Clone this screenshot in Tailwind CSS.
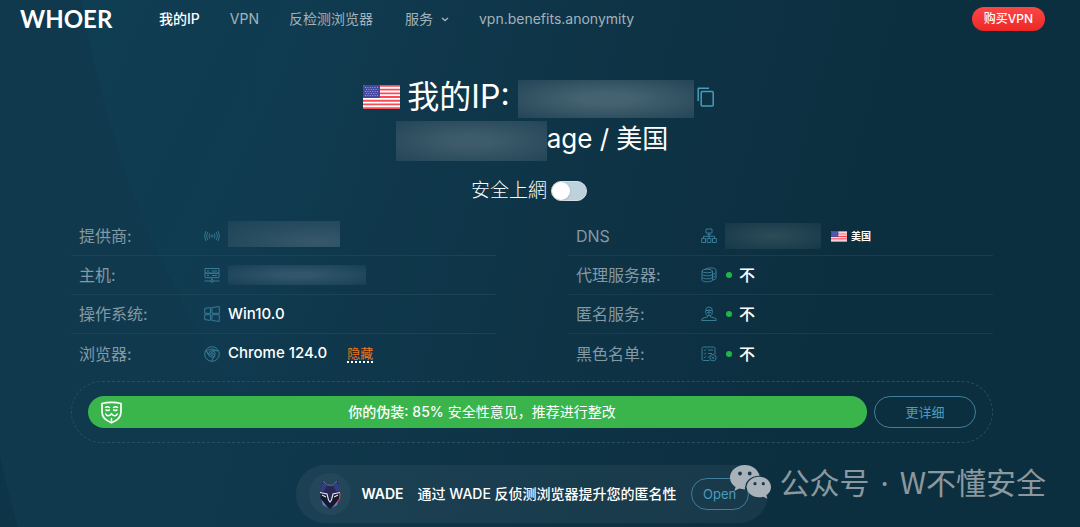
<!DOCTYPE html>
<html lang="zh">
<head>
    <meta charset="UTF-8">
    <meta name="viewport" content="width=device-width, initial-scale=1.0">
    <title>WHOER</title>
    <script src="https://cdn.jsdelivr.net/npm/@tailwindcss/browser@4"></script>
</head>
<body class="relative min-h-screen overflow-x-hidden bg-linear-105 from-[#10394e] from-25% to-[#0c2f3f] to-75% font-[Inter,'Noto_Sans_CJK_SC',sans-serif] text-sm text-white">

    <!-- Shared flag -->
    <svg class="hidden">
        <symbol id="flag" viewBox="0 0 37 24" preserveAspectRatio="none">
            <rect width="37" height="24" rx="2" fill="#fff"/>
            <path d="M2 0h33a2 2 0 0 1 2 1.85H0A2 2 0 0 1 2 0zM0 3.7h37v1.85H0zM0 7.4h37v1.85H0zM0 11.1h37v1.85H0zM0 14.8h37v1.85H0zM0 18.5h37v1.85H0zM0 22.15h37A2 2 0 0 1 35 24H2a2 2 0 0 1-2-1.85z" fill="#fa4a58"/>
            <path d="M2 0h15v12.9H0V2a2 2 0 0 1 2-2z" fill="#4549a0"/>
            <path d="M2 2.5h14M3 4.5h12M2 6.5h14M3 8.5h12M2 10.5h14" stroke="#a9abd8" stroke-width=".9" stroke-dasharray="1 1.4"/>
        </symbol>
    </svg>

    <!-- Background arcs -->
    <svg class="absolute inset-0 -z-10 h-full w-full" viewBox="0 0 1080 527" preserveAspectRatio="none" fill="none">
        <defs>
            <linearGradient id="arc" x1="0" y1="0" x2="460" y2="220" gradientUnits="userSpaceOnUse">
                <stop offset=".15" stop-color="#0f4458" stop-opacity=".4"/>
                <stop offset=".9" stop-color="#0f4458" stop-opacity="0"/>
            </linearGradient>
        </defs>
        <path d="M81 0Q103 120 146 225T300 490L330 527H1080V0z" fill="url(#arc)"/>
        <path d="M0 455Q8 495 18 527H0z" fill="#0c2f42" fill-opacity=".5"/>
    </svg>

    <!-- Header -->
    <header class="flex h-[38px] items-center pl-5 pr-[35px]">
        <a href="#" class="w-[139px] font-[Lato,sans-serif] text-2xl font-bold leading-none">WHOER</a>
        <nav class="flex items-center text-[#a3b3bb]">
            <a href="#" class="mr-[30px] font-medium text-white">我的IP</a>
            <a href="#" class="mr-[30px]">VPN</a>
            <a href="#" class="mr-8">反检测浏览器</a>
            <a href="#" class="mr-[30px] flex items-center gap-2">服务
                <svg class="h-2 w-2" viewBox="0 0 8 8" fill="none" stroke="currentColor" stroke-width="1.4"><path d="M1 3l3 2.5L7 3"/></svg>
            </a>
            <a href="#">vpn.benefits.anonymity</a>
        </nav>
        <button class="ml-auto h-6 rounded-full bg-linear-to-b from-[#fb4646] to-[#ec2626] px-3 text-xs font-medium">购买VPN</button>
    </header>

    <main class="mx-auto max-w-[938px] pr-4 pt-[38px]">
        <!-- IP -->
        <div class="flex flex-col items-center">
            <h1 class="flex h-[42px] items-center pl-[14px] text-[32px] leading-10">
                <svg class="mr-[7px] h-6 w-[37px]"><use href="#flag"/></svg>
                我的IP:
                <span class="ml-2 mt-1 h-[38px] w-[176px] bg-radial-[ellipse_at_center] from-[#456270] from-20% to-[#234557]"></span>
                <button class="ml-[3px]" aria-label="复制">
                    <svg class="h-5 w-[18px]" viewBox="0 0 18 20" fill="none" stroke="#4b9cbd" stroke-width="1.5"><path d="M1.2 14V1.8q0-.6.6-.6H12"/><rect x="4.2" y="4.5" width="12" height="14.5" rx="1"/></svg>
                </button>
            </h1>
            <div class="flex h-[42px] items-center text-[26px]">
                <span class="mt-1 h-10 w-[151px] bg-radial-[ellipse_at_center] from-[#3d5b6a] from-20% to-[#234658]"></span>
                age / 美国
            </div>
            <label class="mt-[14px] flex h-[30px] items-center gap-1 pr-[6px] font-['Noto_Sans_CJK_TC',sans-serif] text-[19px] font-light">
                安全上網
                <input type="checkbox" class="peer sr-only">
                <span class="mt-1 h-5 w-9 rounded-full border border-[#d8dfe2] bg-[#bdd2dc] before:block before:size-[18px] before:rounded-full before:bg-white before:shadow peer-checked:before:translate-x-4"></span>
            </label>
        </div>

        <!-- Details -->
        <div class="mt-[13px] grid grid-cols-2 gap-[72px] text-base text-[#8499a4]">
            <dl class="divide-y divide-[#1b4354]">
                <div class="flex h-[39px] items-center pl-2">
                    <dt class="w-[125px]">提供商:</dt>
                    <dd class="flex items-center gap-2">
                        <svg class="size-4" viewBox="0 0 16 16" fill="none" stroke="#397b97" stroke-width=".9"><circle cx="8" cy="8" r="1"/><path d="M5.8 5.5q-1.8 2.5 0 5M10.2 5.5q1.8 2.5 0 5M3.8 4q-2.6 4 0 8M12.2 4q2.6 4 0 8M1.9 3q-2.8 5 0 10M14.1 3q2.8 5 0 10"/></svg>
                        <span class="-mt-1 h-[26px] w-[112px] bg-radial-[ellipse_at_80%_80%] from-[#36586a] to-[#1d4357]"></span>
                    </dd>
                </div>
                <div class="flex h-[39px] items-center pl-2">
                    <dt class="w-[125px]">主机:</dt>
                    <dd class="flex items-center gap-2">
                        <svg class="size-4" viewBox="0 0 16 16" fill="none" stroke="#397b97"><path d="M1 1.5h14v4.7H1zM1 6.2h14v4.5H1zM8 10.7v2.5M.5 14h6M9.5 14h6M3 4h2M3 8.5h2M8 4h5M8 8.5h5"/><circle cx="8" cy="14" r="1.3"/></svg>
                        <span class="h-5 w-[138px] bg-radial-[ellipse_at_center] from-[#31556a] from-20% to-[#173f53]"></span>
                    </dd>
                </div>
                <div class="flex h-[39px] items-center pl-2">
                    <dt class="w-[125px]">操作系统:</dt>
                    <dd class="flex items-center gap-2 text-[15px] font-medium text-white">
                        <svg class="size-4" viewBox="0 0 16 16" fill="none" stroke="#397b97"><path d="M.7 2.4l5.8-.8v5.7H.7zM8 1.5L15.3.6v6.7H8zM.7 8.7h5.8v5.7l-5.8-.8zM8 8.7h7.3v6.7L8 14.5z"/></svg>
                        Win10.0
                    </dd>
                </div>
                <div class="flex h-[39px] items-center pl-2">
                    <dt class="w-[125px]">浏览器:</dt>
                    <dd class="flex items-center gap-2 text-[15px] font-medium text-white">
                        <svg class="size-4" viewBox="0 0 16 16" fill="none" stroke="#397b97"><circle cx="8" cy="8" r="7.3"/><circle cx="8" cy="8" r="3.2"/><circle cx="8" cy="8" r="1.4"/><path d="M2 4l3 5.3M1.8 4.2L5 9.5M8 4.8h6.5M10.8 9.6L7.5 15M3.5 4.5Q8 1.5 13 4.8"/></svg>
                        Chrome 124.0
                        <a href="#" class="ml-3 border-b-2 border-dotted border-white text-[13px] font-normal leading-4 text-[#e9771c]">隐藏</a>
                    </dd>
                </div>
            </dl>
            <dl class="divide-y divide-[#183d4d]">
                <div class="flex h-[39px] items-center pl-2">
                    <dt class="w-[125px]">DNS</dt>
                    <dd class="flex items-center text-white">
                        <svg class="mr-2 size-4" viewBox="0 0 16 16" fill="none" stroke="#397b97"><path d="M5 1h6v4H5zM6.5 6.5h3M8 5v5M2.5 10V8.3h11V10M.7 10.5h3.8v4H.7zM6.1 10.5h3.8v4H6.1zM11.5 10.5h3.8v4h-3.8z"/></svg>
                        <span class="h-[26px] w-24 bg-radial-[ellipse_at_center] from-[#2d4c58] to-[#153848]"></span>
                        <svg class="ml-[10px] mr-1 h-[11px] w-4"><use href="#flag"/></svg>
                        <span class="text-[10px] font-bold">美国</span>
                    </dd>
                </div>
                <div class="flex h-[39px] items-center pl-2">
                    <dt class="w-[125px]">代理服务器:</dt>
                    <dd class="flex items-center font-medium text-white">
                        <svg class="mr-[9px] size-4" viewBox="0 0 16 16" fill="none" stroke="#397b97"><path d="M1 4v9c0 2.4 10.500 2.400 10.500 0V4M1 7c0 2.400 10.500 2.400 10.500 0M1 10c0 2.400 10.500 2.400 10.500 0M4 2.200C7 .2 15 .6 15 2.800V11q0 1.500-3.500 2.200M11.500 7.300Q15 6.700 15 5.500M11.500 10.200Q15 9.600 15 8.400"/><ellipse cx="6.250" cy="4" rx="5.250" ry="1.800"/></svg>
                        <span class="mr-[7px] size-[6px] rounded-full bg-[#20b54a]"></span>不
                    </dd>
                </div>
                <div class="flex h-[39px] items-center pl-2">
                    <dt class="w-[125px]">匿名服务:</dt>
                    <dd class="flex items-center font-medium text-white">
                        <svg class="mr-[9px] size-4" viewBox="0 0 16 16" fill="none" stroke="#397b97"><path d="M4.700 4.500a3.300 3.500 0 0 1 6.600 0v2q0 2-1.800 3.200H6.500Q4.700 8.500 4.700 6.500zM5 4.500h6M6 6.500h1.500M8.500 6.500H10M6.500 9.500v1.300L2 12.200Q.7 12.700.7 14.500h14.600q0-1.800-1.300-2.300l-4.500-1.400V9.500M8 3v6"/></svg>
                        <span class="mr-[7px] size-[6px] rounded-full bg-[#20b54a]"></span>不
                    </dd>
                </div>
                <div class="flex h-[39px] items-center pl-2">
                    <dt class="w-[125px]">黑色名单:</dt>
                    <dd class="flex items-center font-medium text-white">
                        <svg class="mr-[9px] size-4" viewBox="0 0 16 16" fill="none" stroke="#397b97"><path d="M8.500 14.500H2.500Q1 14.500 1 13V2.500Q1 1 2.500 1h10Q14 1 14 2.500V8M2.800 4l.8.8L5 3.200M2.800 7.500l.8.8L5 6.700M2.800 11l.8.8L5 10.200M7 4h5M7 7.500h4M7 11h1.500M10.800 10.500l2.400 2.400M13.200 10.500l-2.400 2.400"/><circle cx="12" cy="11.700" r="3.200"/></svg>
                        <span class="mr-[7px] size-[6px] rounded-full bg-[#20b54a]"></span>不
                    </dd>
                </div>
            </dl>
        </div>

        <!-- Disguise -->
        <div class="mt-2 flex gap-[7px] rounded-full border border-dashed border-[#2a4f5e] px-4 py-[14px]">
            <div class="flex h-8 flex-1 items-center rounded-full bg-[#3ab54c] pl-3 pr-[26px]">
                <svg class="h-[23px] w-[23px]" viewBox="0 0 23 23" fill="none" stroke="#fff" stroke-width="1.700" stroke-linecap="round" stroke-linejoin="round"><path d="M2 2.500Q11.500.3 21 2.500V11q0 7-9.500 10.800Q2 18 2 11z"/><path d="M5.500 6.300q2-1.200 4 .2M13.500 6.500q2-1.400 4-.2M6 9q1.700 1 3.300 0M13.700 9q1.600 1 3.300 0M5.800 13q1.200 2.400 3.200 1.600 1.800-.6 2.500-2 .7 1.400 2.500 2 2 .8 3.200-1.600M11.500 17.500v2.500" stroke-width="1.500"/></svg>
                <p class="flex-1 text-center"><span class="font-medium">你的伪装: 85%</span> 安全性意见，推荐进行整改</p>
            </div>
            <button class="h-8 w-[102px] rounded-full border border-[#3f7f9b] text-[13px] text-[#4b9cbd]">更详细</button>
        </div>

        <!-- WADE -->
        <div class="mx-auto mt-[22px] flex h-[58px] w-fit items-center rounded-full bg-white/5 pl-[13px] pr-[19px]">
            <span class="mr-[10px] flex size-[42px] items-center justify-center rounded-full bg-white/4">
                <svg class="h-[29px] w-[22px]" viewBox="0 0 22 29">
                    <path d="M3.500 0L9 5h4l5.500-5 1.500 9 1 9-4 7-6 4-6-4-4-7 1-9z" fill="#252850"/>
                    <path d="M4 1l4 4.500L5 11l-4 1zM18 1l-4 4.500 3 5.500 4 1z" fill="#323b83"/>
                    <path d="M4 1l4.500 4.200h5L18 1" fill="none" stroke="#78809f" stroke-width=".8"/>
                    <path d="M1.500 13l6.500 2.500L11 23l3-7.500 6.500-2.500-1 8-4.500 4-4 3-4-3-4.500-4z" fill="#14182c"/>
                    <path d="M2 19l4 5 3 4-5-3zM20 19l-4 5-3 4 5-3z" fill="#6b82c6"/>
                    <path d="M1 12.500l7 1.500 1.500 6L11 22l1.500-2L14 14l7-1.500M3 15l4 2M19 15l-4 2" fill="none" stroke="#e6e8ee" stroke-width="1.100"/>
                    <path d="M21 13l-.5 6-2.500 4" fill="none" stroke="#d33b50" stroke-width="1.300"/>
                </svg>
            </span>
            <span class="mr-[14px] font-semibold">WADE</span>
            <span class="mr-[14px] font-medium">通过 WADE 反侦测浏览器提升您的匿名性</span>
            <button class="h-8 w-[58px] rounded-full border border-[#3f7f9b] text-[13px] text-[#4b9cbd]">Open</button>
        </div>
    </main>

    <!-- Watermark -->
    <div class="absolute bottom-[22px] right-[34px] flex items-center gap-2 font-['Noto_Sans_CJK_SC',sans-serif] text-[30px] leading-[44px] text-[#c5c8cb]/70">
        <svg class="h-[34px] w-[42px]" viewBox="0 0 42 34">
            <path d="M15 0C6.500 0 0 5.700 0 12.500c0 4 2.200 7.400 5.600 9.600L4.300 26l5-2.400c1.800.5 3.600.8 5.600.8C14.500 16 21 10.600 29.600 10.800 28 4.500 22 0 15 0z" fill="#a9b2b8"/>
            <path d="M41 22c0-5.800-5.500-10.300-12-10.300S16.800 16.200 16.800 22 22.300 32.300 29 32.300c1.500 0 3-.2 4.300-.6l4 2.100-1-3.500c3-2 4.700-5 4.700-8.300z" fill="#a9b2b8"/>
            <g fill="#15394a"><circle cx="10" cy="8.500" r="1.900"/><circle cx="19.700" cy="8.500" r="1.900"/><circle cx="25" cy="18.700" r="1.600"/><circle cx="33.300" cy="18.700" r="1.600"/></g>
        </svg>
        <span>公众号 <span class="px-1 font-[Inter,sans-serif]">·</span> W不懂安全</span>
    </div>
</body>
</html>
